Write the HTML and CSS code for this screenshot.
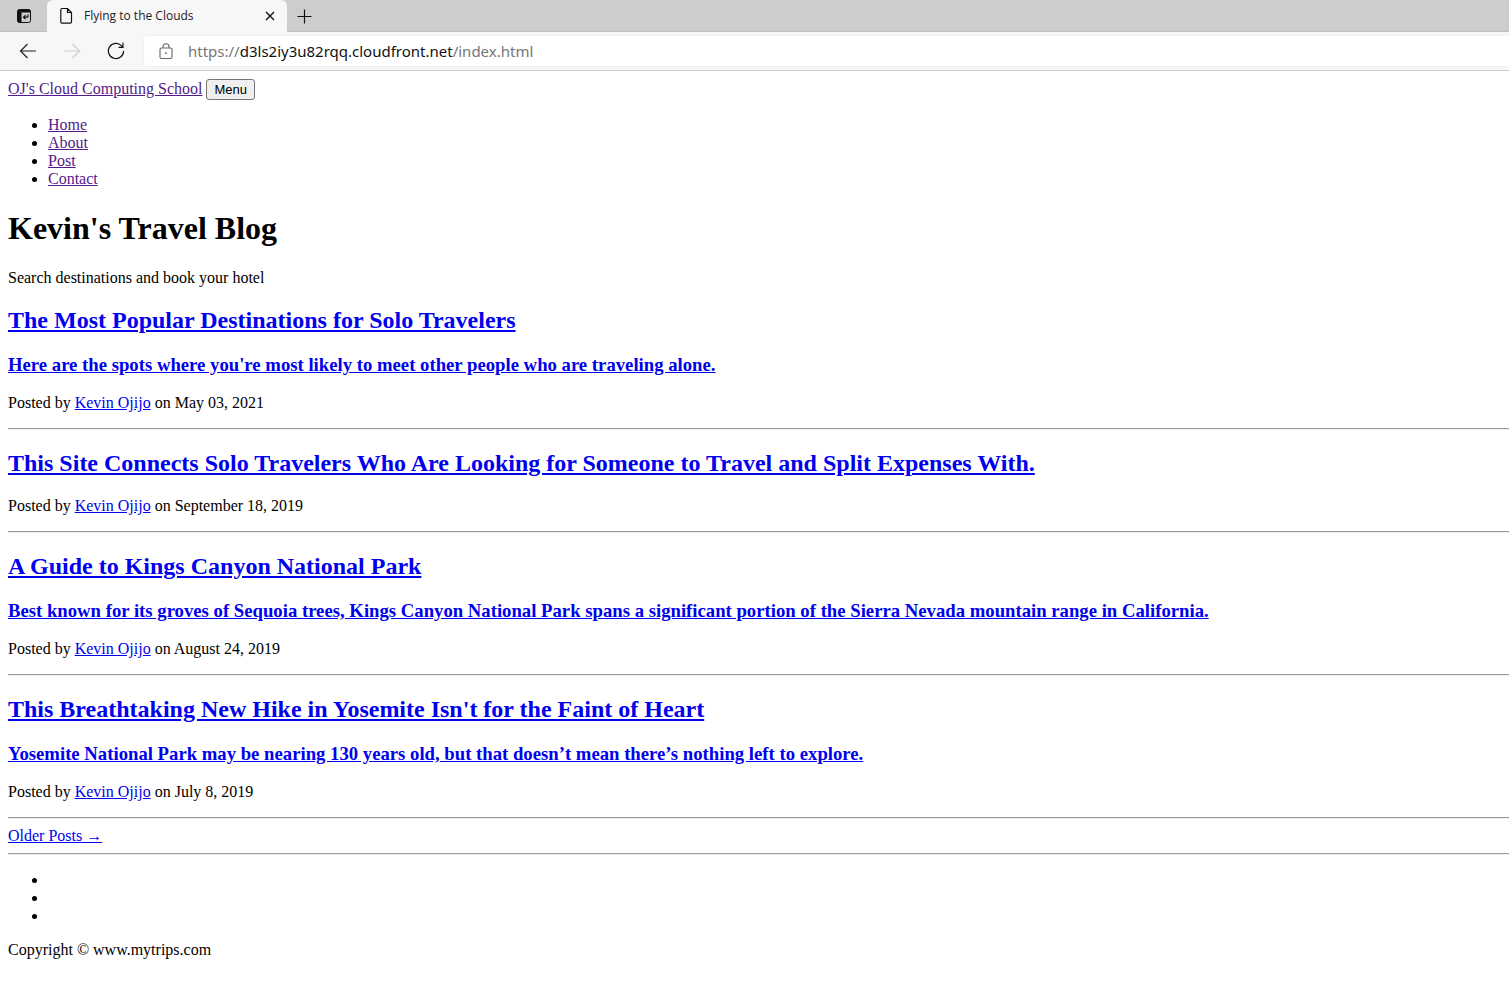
FILE: index.html
```html
<!DOCTYPE html>
<html lang="en">
<head>
<meta charset="utf-8">
<title>Flying to the Clouds</title>
<link rel="stylesheet" href="styles.css">
</head>
<body>
<header class="browser">
  <div class="tab-strip">
    <button class="tab-actions" type="button" aria-label="Tab actions">
      <svg width="16" height="16" viewBox="0 0 16 16" fill="none" stroke="#111"><rect x="1.500" y="1.500" width="13" height="13" rx="2"/><path d="M1.500 13V3.500a2 2 0 0 1 2-2h9a2 2 0 0 1 2 2v1h-9v10h-2a2 2 0 0 1-2-1.500z" fill="#111" stroke="none"/><path d="M12 6.500v1.700a1 1 0 0 1-1 1H7.500M9.500 7.200l-2 2 2 2" stroke-width="1.200"/></svg>
    </button>
    <div class="tab">
      <svg width="14" height="18" viewBox="0 0 14 18" fill="none" stroke="#111" stroke-width="1.200"><path d="M3 1.500h5.500l4 4V15a1.200 1.200 0 0 1-1.200 1.200H3A1.200 1.200 0 0 1 1.800 15V2.700A1.200 1.200 0 0 1 3 1.500zM8.500 1.500v4h4"/></svg>
      <span class="tab-title">Flying to the Clouds</span>
      <button class="tab-close" type="button" aria-label="Close tab">
        <svg width="10" height="10" viewBox="0 0 10 10" stroke="#111" stroke-width="1.400"><path d="M1 1l8 8M9 1L1 9"/></svg>
      </button>
    </div>
    <button class="new-tab" type="button" aria-label="New tab">
      <svg width="15" height="15" viewBox="0 0 15 15" stroke="#111" stroke-width="1.200"><path d="M7.500 0.500v14M.5 7.500h14"/></svg>
    </button>
  </div>
  <div class="toolbar">
    <nav class="tools" aria-label="Browser">
      <button type="button" aria-label="Back"><svg width="18" height="16" viewBox="0 0 18 16" fill="none" stroke="#222" stroke-width="1.200"><path d="M17 8H1.500M8.500 1L1.500 8l7 7"/></svg></button>
      <button type="button" aria-label="Forward" disabled><svg width="18" height="16" viewBox="0 0 18 16" fill="none" stroke="#ccc" stroke-width="1.200"><path d="M1 8h15.500M9.500 1l7 7-7 7"/></svg></button>
      <button type="button" aria-label="Refresh"><svg width="18" height="18" viewBox="0 0 18 18" fill="none" stroke="#111" stroke-width="1.200"><path d="M16.600 9a7.600 7.600 0 1 1-2-5.200L16 5.200M16 .8v4.500h-4.500"/></svg></button>
    </nav>
    <div class="address">
      <svg width="14" height="17" viewBox="0 0 14 17" fill="none" stroke="#666" stroke-width="1.100"><rect x="1" y="5" width="12" height="10.500" rx="1.500"/><path d="M4 5V3.800a3 3 0 0 1 6 0V5"/><circle cx="7" cy="10.200" r=".9" fill="#666" stroke="none"/></svg>
      <span class="url">https://<span class="host">d3ls2iy3u82rqq.cloudfront.net</span>/index.html</span>
    </div>
  </div>
</header>
<main class="page">
  <nav>
    <a class="visited" href="#">OJ's Cloud Computing School</a>
    <button class="menu" type="button">Menu</button>
    <ul class="list">
      <li><a class="visited" href="#">Home</a></li>
      <li><a class="visited" href="#">About</a></li>
      <li><a class="visited" href="#">Post</a></li>
      <li><a class="visited" href="#">Contact</a></li>
    </ul>
  </nav>
  <h1>Kevin's Travel Blog</h1>
  <p>Search destinations and book your hotel</p>
  <article>
    <a href="#"><h2>The Most Popular Destinations for Solo Travelers</h2>
    <h3>Here are the spots where you're most likely to meet other people who are traveling alone.</h3></a>
    <p>Posted by <a href="#">Kevin Ojijo</a> on May 03, 2021</p>
  </article>
  <hr>
  <article>
    <a href="#"><h2>This Site Connects Solo Travelers Who Are Looking for Someone to Travel and Split Expenses With.</h2></a>
    <p>Posted by <a href="#">Kevin Ojijo</a> on September 18, 2019</p>
  </article>
  <hr>
  <article>
    <a href="#"><h2>A Guide to Kings Canyon National Park</h2>
    <h3>Best known for its groves of Sequoia trees, Kings Canyon National Park spans a significant portion of the Sierra Nevada mountain range in California.</h3></a>
    <p>Posted by <a href="#">Kevin Ojijo</a> on August 24, 2019</p>
  </article>
  <hr>
  <article>
    <a href="#"><h2>This Breathtaking New Hike in Yosemite Isn't for the Faint of Heart</h2>
    <h3>Yosemite National Park may be nearing 130 years old, but that doesn’t mean there’s nothing left to explore.</h3></a>
    <p>Posted by <a href="#">Kevin Ojijo</a> on July 8, 2019</p>
  </article>
  <hr>
  <a href="#">Older Posts →</a>
  <hr>
  <footer>
    <ul class="list"><li></li><li></li><li></li></ul>
    <p>Copyright © www.mytrips.com</p>
  </footer>
</main>
</body>
</html>
```
FILE: styles.css
```css
* { box-sizing: border-box; }
body { margin: 0; background: #fff; color: #000; font: 16px/18px "Liberation Serif", "Times New Roman", serif; }

.browser { font-family: "Noto Sans", "Open Sans", sans-serif; border-bottom: 1px solid #cdcdcd; background: #f7f7f7; }
.browser svg { display: block; flex: none; }
.browser button { display: flex; align-items: center; justify-content: center; padding: 0; border: 0; background: none; }
.tab-strip { display: flex; height: 32px; background: #cdcdcd; box-shadow: inset 0 -1px #c0c0c0; }
.tab-actions { width: 47px; }
.tab { display: flex; align-items: center; width: 240px; padding: 0 12px; gap: 11px; background: #f7f7f7; border-radius: 6px 6px 0 0; }
.tab-title { flex: 1; font-family: "Open Sans", sans-serif; font-size: 12px; line-height: 16px; color: #222; white-space: nowrap; }
.new-tab { width: 35px; }
.toolbar { display: flex; align-items: center; height: 38px; }
.tools { display: flex; width: 144px; padding-left: 6px; }
.tools button { width: 44px; height: 32px; }
.address { flex: 1; display: flex; align-items: center; gap: 15px; height: 30px; padding-left: 15px; background: #fff; border-radius: 4px 0 0 4px; box-shadow: 0 0 2px 1px #f0f0f0; }
.url { font-size: 15px; line-height: 22px; color: #767676; white-space: nowrap; }
.host { color: #111; }

.page { padding: 8px 0 0 8px; }
a { color: #0000ee; text-decoration: underline; }
.visited { color: #551a8b; }
.menu { height: 21px; padding: 0 7px; border: 1px solid #767676; border-radius: 3px; background: #efefef; color: #000; font: 13px/18px "Liberation Sans", Arial, sans-serif; }
.list { margin: 16px 0; padding-left: 40px; list-style: disc; }
.list li { height: 18px; }
h1 { margin: 21px 0; font-size: 32px; line-height: 39px; }
h2 { margin: 20px 0; font-size: 24px; line-height: 27px; }
h3 { margin: 19px 0; line-height: 21px; }
p { margin: 16px 0; }
hr { margin: 8px 0; border: 0; border-top: 1px solid #9a9a9a; border-bottom: 1px solid #eee; }
```
